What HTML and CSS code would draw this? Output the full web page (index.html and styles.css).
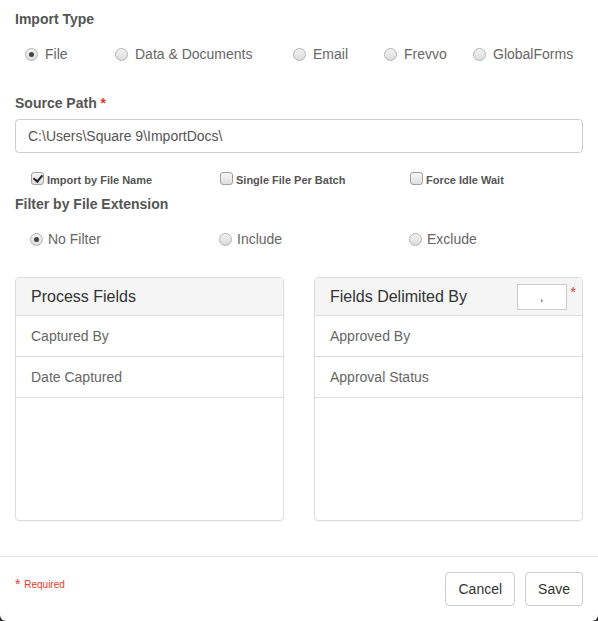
FILE: index.html
```html
<!DOCTYPE html>
<html lang="en">
<head>
<meta charset="utf-8">
<title>Import Settings</title>
<link rel="stylesheet" href="styles.css">
</head>
<body>
<div class="modal">
  <div class="modal-body">
    <div class="section-label first">Import Type</div>
    <div class="type-row">
      <label class="opt"><input type="radio" name="type" class="radio" checked><span>File</span></label>
      <label class="opt"><input type="radio" name="type" class="radio"><span>Data &amp; Documents</span></label>
      <label class="opt"><input type="radio" name="type" class="radio"><span>Email</span></label>
      <label class="opt"><input type="radio" name="type" class="radio"><span>Frevvo</span></label>
      <label class="opt"><input type="radio" name="type" class="radio"><span>GlobalForms</span></label>
    </div>

    <div class="section-label source">Source Path <span class="req">*</span></div>
    <input class="text-input" type="text" value="C:\Users\Square 9\ImportDocs\">

    <div class="three-col checks">
      <label class="chk"><input type="checkbox" class="checkbox" checked><span>Import by File Name</span></label>
      <label class="chk"><input type="checkbox" class="checkbox"><span>Single File Per Batch</span></label>
      <label class="chk"><input type="checkbox" class="checkbox"><span>Force Idle Wait</span></label>
    </div>

    <div class="section-label filter">Filter by File Extension</div>
    <div class="three-col filters">
      <label class="opt"><input type="radio" name="filter" class="radio" checked><span>No Filter</span></label>
      <label class="opt"><input type="radio" name="filter" class="radio"><span>Include</span></label>
      <label class="opt"><input type="radio" name="filter" class="radio"><span>Exclude</span></label>
    </div>

    <div class="panels">
      <div class="panel">
        <div class="panel-heading">Process Fields</div>
        <div class="panel-item">Captured By</div>
        <div class="panel-item">Date Captured</div>
      </div>
      <div class="panel">
        <div class="panel-heading split">
          <span>Fields Delimited By</span>
          <span class="delim">
            <input class="delim-input" type="text" value=",">
            <span class="req">*</span>
          </span>
        </div>
        <div class="panel-item">Approved By</div>
        <div class="panel-item">Approval Status</div>
      </div>
    </div>
  </div>

  <div class="modal-footer">
    <div class="required-note"><span class="star">*</span> Required</div>
    <div class="actions">
      <button class="btn" type="button">Cancel</button>
      <button class="btn" type="button">Save</button>
    </div>
  </div>
</div>
</body>
</html>
```

FILE: styles.css
```css
* {
  box-sizing: border-box;
}

html, body {
  margin: 0;
  padding: 0;
}

body {
  background: #2b2b2b;
  font-family: "Liberation Sans", Arial, sans-serif;
  font-size: 14px;
  color: #555;
}

.modal {
  width: 598px;
  height: 621px;
  background: #fff;
  border-radius: 0 0 6px 6px;
  display: flex;
  flex-direction: column;
}

.modal-body {
  padding: 0 15px;
}

.section-label {
  font-weight: bold;
  font-size: 14px;
  line-height: 20px;
  color: #555;
}

.section-label.first {
  margin-top: 9px;
}

.section-label.source {
  margin-top: 29px;
}

.section-label.filter {
  margin-top: 4px;
}

.req {
  color: #e5391f;
}

/* radio option rows */
.type-row {
  margin-top: 15px;
  padding-left: 10px;
  display: grid;
  grid-template-columns: 90px 178px 91px 89px auto;
  height: 20px;
}

.opt {
  display: flex;
  align-items: center;
  line-height: 20px;
  color: #666;
}

.radio {
  appearance: none;
  -webkit-appearance: none;
  width: 13px;
  height: 13px;
  margin: 0 7px 0 0;
  border-radius: 50%;
  border: 1px solid #b3b3b3;
  background: linear-gradient(#f2f2f2, #dcdcdc);
  display: inline-grid;
  place-content: center;
  flex: none;
}

.radio:checked::after {
  content: "";
  width: 5px;
  height: 5px;
  border-radius: 50%;
  background: #444;
}

.text-input {
  display: block;
  width: 100%;
  height: 34px;
  margin-top: 6px;
  padding: 6px 12px;
  border: 1px solid #ccc;
  border-radius: 4px;
  font-family: inherit;
  font-size: 14px;
  color: #555;
  outline: none;
}

.three-col {
  display: grid;
  grid-template-columns: 189px 190px auto;
  padding-left: 16px;
}

.checks {
  margin-top: 17px;
  height: 20px;
}

.chk {
  display: flex;
  align-items: center;
  font-size: 11px;
  font-weight: bold;
  color: #555;
}

.checkbox {
  appearance: none;
  -webkit-appearance: none;
  width: 13px;
  height: 13px;
  margin: -3px 3px 0 0;
  border: 1px solid #a0a0a0;
  border-radius: 3px;
  background: linear-gradient(#f7f7f7, #dedede);
  position: relative;
  flex: none;
}

.checkbox:checked::after {
  content: "";
  position: absolute;
  left: 3px;
  top: 0;
  width: 4px;
  height: 7px;
  border: solid #222;
  border-width: 0 2px 2px 0;
  transform: rotate(40deg);
}

.filters {
  margin-top: 15px;
  height: 20px;
  padding-left: 15px;
}

.filters .radio {
  margin-right: 5px;
}

/* field list panels */
.panels {
  margin-top: 28px;
  display: grid;
  grid-template-columns: 269px 269px;
  justify-content: space-between;
}

.panel {
  height: 244px;
  border: 1px solid #ddd;
  border-radius: 4px;
  box-shadow: 0 1px 1px rgba(0, 0, 0, 0.05);
  overflow: hidden;
}

.panel-heading {
  height: 38px;
  padding: 0 15px;
  background: #f5f5f5;
  border-bottom: 1px solid #ddd;
  font-size: 16px;
  color: #333;
  display: flex;
  align-items: center;
}

.panel-heading.split {
  justify-content: space-between;
  padding-right: 6px;
}

.delim {
  display: flex;
  align-items: flex-start;
  gap: 4px;
  font-size: 14px;
}

.delim-input {
  width: 50px;
  height: 26px;
  border: 1px solid #ccc;
  text-align: center;
  font-family: inherit;
  font-size: 12px;
  color: #444;
  padding: 0;
  outline: none;
}

.panel-item {
  height: 41px;
  padding: 0 15px;
  border-bottom: 1px solid #ddd;
  display: flex;
  align-items: center;
  color: #666;
}

.modal-footer {
  margin-top: auto;
  border-top: 1px solid #e5e5e5;
  padding: 15px 15px;
  display: flex;
  justify-content: space-between;
  align-items: flex-start;
}

.required-note {
  color: #e5391f;
  font-size: 10px;
  margin-top: 4px;
}

.required-note .star {
  font-size: 14px;
  vertical-align: -1px;
  margin-right: 1px;
}

.actions {
  display: flex;
  gap: 10px;
}

.btn {
  height: 34px;
  padding: 6px 12px;
  background: #fff;
  border: 1px solid #ccc;
  border-radius: 4px;
  font-family: inherit;
  font-size: 14px;
  color: #333;
}
```
